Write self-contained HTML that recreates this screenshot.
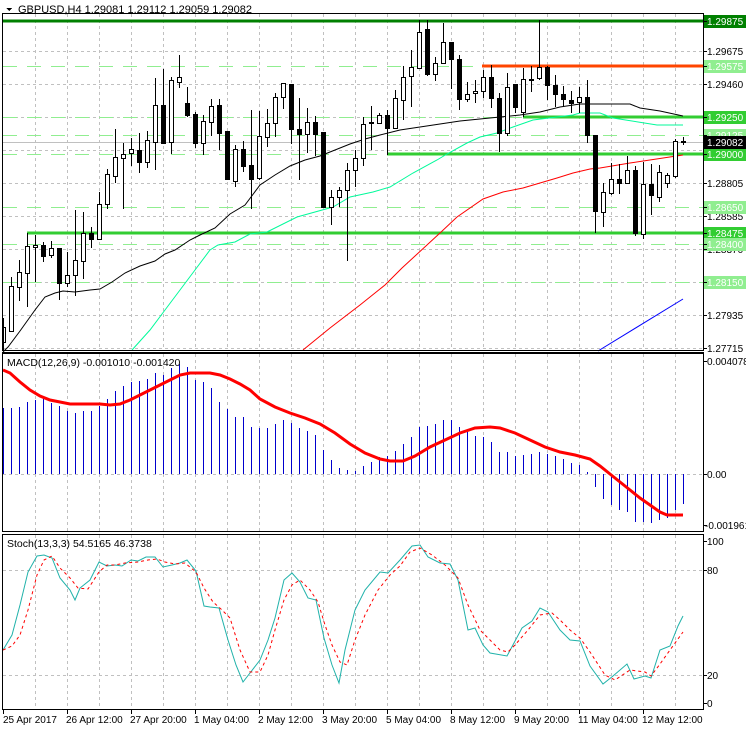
<!DOCTYPE html>
<html><head><meta charset="utf-8">
<style>
html,body{margin:0;padding:0;background:#fff;}
body{width:746px;height:731px;overflow:hidden;position:relative;font-family:"Liberation Sans",sans-serif;}
svg{position:absolute;left:0;top:0;}
text{font-family:"Liberation Sans",sans-serif;font-size:10px;}
</style></head><body>
<svg id="s" width="746" height="731" xmlns="http://www.w3.org/2000/svg" shape-rendering="crispEdges">
<g id="grid" stroke="#c0c0c0" stroke-dasharray="3,3" stroke-width="1"></g>
<g id="hl"></g>
<g id="ma" fill="none" shape-rendering="auto"></g>
<g id="candles"></g>
<g id="macd"></g>
<g id="stoch" fill="none" shape-rendering="auto"></g>
<g fill="none" stroke="#000" stroke-width="1">
<rect x="2.5" y="13.5" width="701" height="337"/>
<line x1="2" y1="352.5" x2="704" y2="352.5"/>
<rect x="2.5" y="353.5" width="701" height="178"/>
<rect x="2.5" y="534.5" width="701" height="175"/>
</g>
<g id="labels"></g>
<polygon points="6,8 12,8 9,11" fill="#000"/>
<text x="18" y="13" fill="#000" style="font-size:11px">GBPUSD,H4  1.29081 1.29112 1.29059 1.29082</text>
<text x="7" y="366" fill="#000" style="font-size:10.5px">MACD(12,26,9) -0.001010 -0.001420</text>
<text x="7" y="547" fill="#000" style="font-size:10.5px">Stoch(13,3,3) 54.5165 46.3738</text>
<g fill="#000" style="font-size:10px">
<text x="707" y="55">1.29675</text>
<text x="707" y="88">1.29460</text>
<text x="707" y="187">1.28805</text>
<text x="707" y="220">1.28585</text>
<text x="707" y="253">1.28370</text>
<text x="707" y="319">1.27935</text>
<text x="707" y="352">1.27715</text>
<text x="707" y="365">0.004078</text>
<text x="707" y="478">0.00</text>
<text x="705" y="529">-0.001961</text>
<text x="707" y="545">100</text>
<text x="707" y="574">80</text>
<text x="707" y="679">20</text>
<text x="707" y="707">0</text>
</g>
<g id="boxes"></g>
<g fill="#000" style="font-size:10px">
<text x="3" y="723">25 Apr 2017</text>
<text x="66" y="723">26 Apr 12:00</text>
<text x="130" y="723">27 Apr 20:00</text>
<text x="194" y="723">1 May 04:00</text>
<text x="258" y="723">2 May 12:00</text>
<text x="322" y="723">3 May 20:00</text>
<text x="386" y="723">5 May 04:00</text>
<text x="450" y="723">8 May 12:00</text>
<text x="514" y="723">9 May 20:00</text>
<text x="578" y="723">11 May 04:00</text>
<text x="642" y="723">12 May 12:00</text>
</g>
<g id="ticks" stroke="#000"></g>
</svg>
<script>
var NS="http://www.w3.org/2000/svg";
function el(p,t,a){var e=document.createElementNS(NS,t);for(var k in a)e.setAttribute(k,a[k]);document.getElementById(p).appendChild(e);return e;}
for(var x=35;x<=700;x+=32){
 el("grid","line",{x1:x+.5,y1:14,x2:x+.5,y2:350});
 el("grid","line",{x1:x+.5,y1:354,x2:x+.5,y2:531});
 el("grid","line",{x1:x+.5,y1:535,x2:x+.5,y2:709});
}
[51,84,117,150,183,216,249,282,315,348].forEach(function(y){el("grid","line",{x1:3,y1:y+.5,x2:703,y2:y+.5});});
el("grid","line",{x1:3,y1:474.5,x2:703,y2:474.5});
el("grid","line",{x1:3,y1:570.5,x2:703,y2:570.5});
el("grid","line",{x1:3,y1:675.5,x2:703,y2:675.5});
[66,117,135,154,207,244,282].forEach(function(y){el("hl","line",{x1:3,y1:y+.5,x2:703,y2:y+.5,stroke:"#90ee90","stroke-dasharray":"14,10","stroke-width":1});});
el("hl","line",{x1:3,y1:142.5,x2:703,y2:142.5,stroke:"#c0c0c0"});
el("hl","line",{x1:3,y1:21,x2:703,y2:21,stroke:"#008000","stroke-width":3});
el("hl","line",{x1:482,y1:66,x2:703,y2:66,stroke:"#ff4500","stroke-width":3});
el("hl","line",{x1:523,y1:117,x2:703,y2:117,stroke:"#32cd32","stroke-width":3});
el("hl","line",{x1:387,y1:154,x2:703,y2:154,stroke:"#32cd32","stroke-width":3});
el("hl","line",{x1:27,y1:233,x2:703,y2:233,stroke:"#32cd32","stroke-width":3});
el("ma","polyline",{stroke:"#000","stroke-width":1,points:"3,352 8,347 20,331 35,310 45,297 55,293 63,291 75,292 90,290 100,289 112,282 125,273 140,266 155,261 165,254 175,250 190,240 200,235 215,228 230,214 245,205 260,185 275,175 290,166 305,160 320,156 335,150 350,144 365,139 380,135 400,130 420,127 440,124 460,121 480,119 500,117 520,115 540,112 560,107 580,104 630,104 640,108 660,111 683,116"});
el("ma","polyline",{stroke:"#00fa9a","stroke-width":1,points:"132,350 150,330 165,310 180,290 195,270 210,250 218,245 235,242 250,234 267,232 297,217 333,207 350,197 373,192 390,187 413,173 437,160 447,154 467,143 480,137 497,133 513,127 533,120 573,115 580,113 600,113 613,118 657,125 683,125"});
el("ma","polyline",{stroke:"#ff0000","stroke-width":1,points:"303,350 330,328 360,305 385,285 402,268 440,233 457,217 483,199 503,192 523,188 540,183 557,178 573,173 590,169 600,168 630,163 683,155"});
el("ma","polyline",{stroke:"#0000ff","stroke-width":1,points:"598,351 683,299"});
var C=[[327,342,318,350,1],[286,331,277,332,1],[272,287,260,301,1],[246,273,233,307,1],[245,247,235,282,1],[245,256,242,262,0],[248,255,241,258,1],[248,283,248,300,0],[275,283,252,287,1],[260,275,210,296,1],[233,261,212,279,1],[233,239,227,248,0],[204,239,192,239,1],[174,204,169,209,1],[157,176,129,183,1],[154,158,143,209,1],[149,153,138,166,1],[150,162,133,173,0],[140,162,131,168,1],[105,142,78,170,1],[105,143,69,143,0],[80,142,77,154,1],[77,82,55,88,1],[103,115,87,117,0],[114,143,112,148,0],[121,143,115,155,1],[106,122,99,136,1],[105,133,99,150,0],[131,179,131,179,0],[149,181,145,187,1],[149,166,141,172,0],[165,179,110,209,0],[136,178,111,180,1],[123,137,109,147,1],[97,123,93,137,1],[83,97,83,109,1],[84,129,84,144,0],[129,134,98,180,0],[122,134,108,153,1],[122,134,116,156,0],[132,207,132,207,0],[197,207,190,225,1],[190,197,187,207,1],[170,190,163,261,1],[158,170,150,187,1],[124,158,117,166,1],[122,123,106,150,1],[115,123,113,123,1],[115,128,110,155,0],[98,128,90,129,1],[77,100,66,120,1],[67,76,50,107,1],[32,68,20,69,1],[29,74,20,76,0],[63,74,57,81,1],[42,63,23,63,1],[42,59,42,89,0],[59,99,55,110,0],[94,99,82,102,1],[91,93,80,103,1],[77,91,70,98,1],[77,98,65,108,0],[98,133,93,152,0],[87,133,73,136,1],[84,107,84,113,0],[79,112,68,117,1],[79,80,66,92,1],[67,78,20,80,1],[67,85,66,100,0],[85,94,75,107,0],[94,99,86,107,0],[100,103,91,113,0],[97,102,87,113,1],[97,135,80,143,0],[135,211,135,233,0],[192,212,183,227,1],[179,193,163,195,1],[179,183,164,194,0],[170,183,156,184,1],[170,233,166,236,0],[184,234,162,239,1],[184,195,164,215,0],[172,197,165,202,1],[175,183,173,188,1],[141,176,139,178,1],[141,142,137,145,1]];
C.forEach(function(c,k){
 var cx=3+8*k;
 el("candles","line",{x1:cx+.5,y1:Math.max(c[2],14),x2:cx+.5,y2:Math.min(c[3],350),stroke:"#000"});
 var h=Math.max(c[1]-c[0],1);
 var x0=cx-2;
 if(k==0)x0=3;
 el("candles","rect",{x:x0+.5,y:c[0]+.5,width:(k==0?2:4),height:h,fill:c[4]?"#fff":"#000",stroke:"#000"});
});
var M=[408,408,407,402,400,399,403,406,411,413,411,411,406,399,391,386,382,381,379,373,375,368,364,367,380,382,388,402,409,417,417,427,428,428,424,420,423,428,431,435,450,460,468,470,471,466,462,457,456,451,444,437,427,426,424,420,420,427,432,436,437,442,452,452,456,455,454,452,454,456,459,463,465,472,487,499,505,510,512,522,522,523,520,518,510,504];
M.forEach(function(t,k){var x=3+8*k+.5;el("macd","line",{x1:x,y1:474,x2:x,y2:t,stroke:"#0000cd","stroke-width":1.4});});
el("macd","polyline",{fill:"none",stroke:"#ff0000","stroke-width":3,"shape-rendering":"auto",points:"3,370 10,373 20,382 30,390 40,396 50,400 60,402 70,404 80,404 100,404 110,405 120,404 130,400 140,395 150,390 160,385 170,380 180,375 190,373 200,373 210,373 220,375 230,379 240,384 250,390 260,399 275,407 290,413 305,418 320,424 335,433 350,444 365,453 380,459 390,461 403,461 415,456 430,447 445,440 460,433 475,428 490,427 500,428 515,433 530,440 545,447 560,452 575,455 590,459 600,466 610,474 620,482 630,490 640,498 650,505 660,512 667,515 683,515"});
el("stoch","polyline",{stroke:"#20b2aa","stroke-width":1,points:"3,650 12,635 20,605 28,572 37,556 44,555 52,558 60,578 70,590 75,600 80,588 90,580 99,562 107,566 115,565 122,566 131,560 138,561 146,557 155,557 163,567 172,565 180,563 187,560 196,571 204,606 210,607 219,608 228,640 236,665 243,682 250,673 260,660 268,640 275,618 284,580 292,573 300,582 308,598 316,600 324,638 332,665 339,683 345,650 355,610 365,590 380,572 388,573 400,560 412,546 420,545 428,557 440,563 450,564 458,580 468,630 475,628 483,645 490,653 507,656 522,628 532,621 540,608 548,612 560,630 570,640 580,641 590,666 603,684 613,676 627,664 634,679 645,676 651,678 660,650 670,646 678,626 683,616"});
el("stoch","polyline",{stroke:"#ff0000","stroke-width":1,"stroke-dasharray":"3,3",points:"3,650 12,646 20,635 28,610 37,575 44,560 52,556 60,568 70,578 78,588 88,589 99,572 107,565 115,565 125,563 138,562 148,560 157,559 165,562 175,564 185,563 196,572 204,588 213,602 222,610 230,618 240,650 250,672 260,672 268,655 275,630 284,600 292,585 300,580 310,590 318,602 325,625 332,645 340,662 347,665 355,640 365,615 378,590 390,575 400,566 410,552 420,548 432,555 445,565 458,578 468,605 480,630 490,640 500,650 508,652 515,645 528,630 540,615 552,613 560,620 570,630 580,638 590,652 605,675 615,680 630,670 645,672 651,676 660,664 670,650 683,632"});
[21,51,66,84,117,135,142,154,183,207,216,233,244,249,282,315,348,361,474,525,541,570,675,703].forEach(function(y){el("ticks","line",{x1:703,y1:y+.5,x2:707,y2:y+.5});});
for(var x=3;x<=700;x+=64){el("ticks","line",{x1:x+.5,y1:710,x2:x+.5,y2:714});}
var B=[[21,"1.29875","#008000"],[66,"1.29575","#90ee90"],[117,"1.29250","#32cd32"],[135,"1.29125","#90ee90"],[154,"1.29000","#32cd32"],[207,"1.28650","#90ee90"],[233,"1.28475","#32cd32"],[244,"1.28400","#90ee90"],[282,"1.28150","#90ee90"],[142,"1.29082","#000"]];
B.forEach(function(b){
 el("boxes","rect",{x:704,y:b[0]-6,width:42,height:13,fill:b[2]});
 var t=el("boxes","text",{x:707,y:b[0]+4,fill:"#fff"});t.textContent=b[1];
});
</script>
</body></html>
